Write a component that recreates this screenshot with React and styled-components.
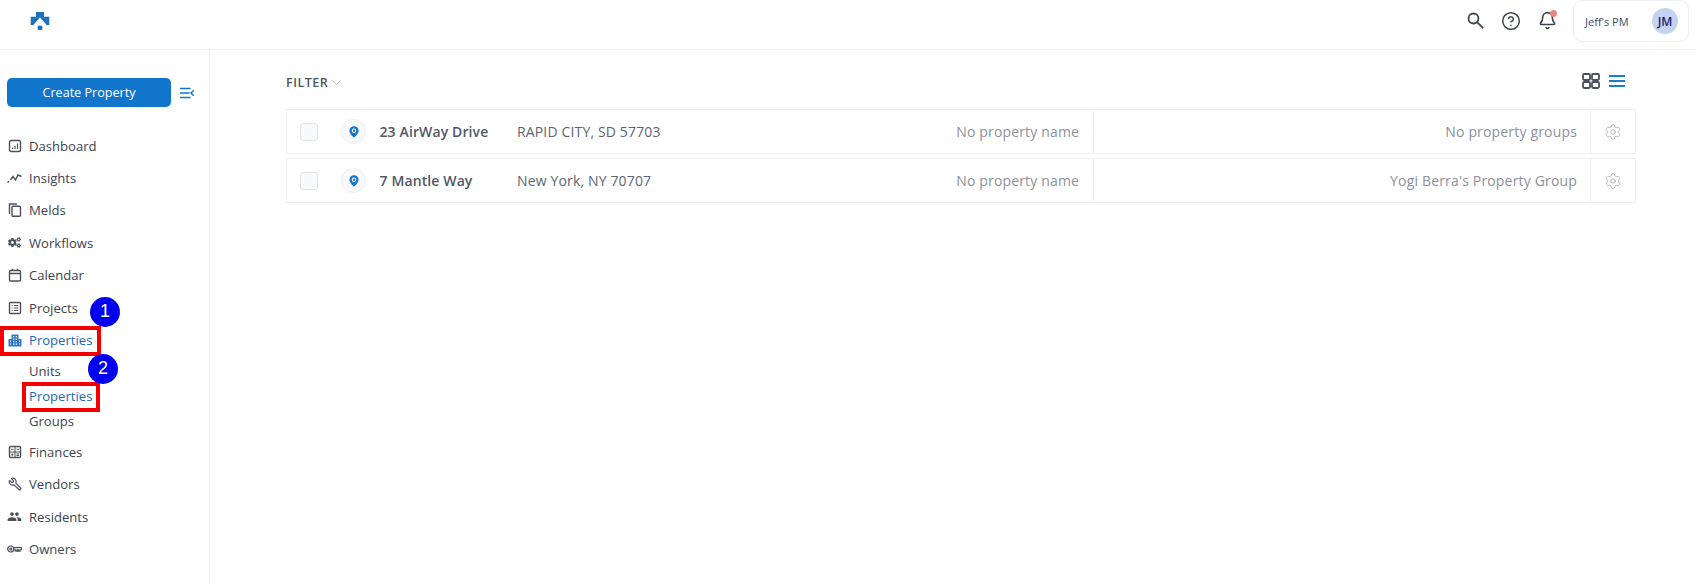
import React from "react";
import styled, { createGlobalStyle } from "styled-components";
import { CircleHelp, Bell, Settings, ChevronDown, Wrench } from "lucide-react";
import { FaCogs } from "react-icons/fa";
import { MdPeople } from "react-icons/md";

const GlobalStyle = createGlobalStyle`
  html, body { margin: 0; padding: 0; background: #fff; }
  body { font-family: "Open Sans", "Liberation Sans", sans-serif; color: #3c4352; }
  * { box-sizing: border-box; }
`;

const Svg = ({ children }) => (
  <svg width="14" height="14" viewBox="0 0 14 14" fill="none" stroke="currentColor" strokeWidth="1.4">
    {children}
  </svg>
);

const SearchIcon = () => (
  <svg width="17" height="17" viewBox="0 0 17 17" fill="none" stroke="currentColor" strokeWidth="1.8">
    <circle cx="6.500" cy="6.500" r="5" />
    <path d="M10.300 10.300L16.200 16.200" />
  </svg>
);
const DashboardIcon = () => (
  <Svg>
    <rect x="1.500" y="1.500" width="11" height="11" rx="1.500" />
    <path d="M4.500 10V8.500M7 10V7M9.500 10V4.500" strokeWidth="1.200" />
  </Svg>
);
const InsightsIcon = () => (
  <svg width="15" height="14" viewBox="0 0 15 14" fill="none" stroke="currentColor" strokeWidth="1.400">
    <path d="M0.500 11.500l1.500-1.300M3.500 9l2.500-3.500 2.500 3.500 2.500-5 3.500 1.500" />
  </svg>
);
const MeldsIcon = () => (
  <Svg>
    <path d="M1.500 11V1h7.500" />
    <rect x="4" y="3.200" width="8.500" height="10" rx="1" />
  </Svg>
);
const CalendarIcon = () => (
  <Svg>
    <rect x="1.500" y="2.500" width="11" height="10.500" rx="1.200" />
    <path d="M1.500 5.500h11M4.500 0.800v2M9.500 0.800v2" />
  </Svg>
);
const ProjectsIcon = () => (
  <Svg>
    <rect x="1.500" y="1.500" width="11" height="11" rx="1.200" />
    <path d="M3.700 4.500h1M6 4.500h4.300M3.700 7h1M6 7h4.300M3.700 9.500h1M6 9.500h4.300" strokeWidth="1.200" />
  </Svg>
);
const BuildingIcon = () => (
  <svg width="14" height="13" viewBox="0 0 14 13" fill="#2f78c4">
    <path
      fillRule="evenodd"
      d="M3.500 0.500h7v4.500h3v7.500H0.500V5h3zM5 2v1.300h1.300V2zM7.700 2v1.300H9V2zM5 4.500v1.300h1.300V4.500zM7.700 4.500v1.300H9V4.500zM2 6.500v1.300h1V6.500zM5 7v1.300h1.300V7zM7.700 7v1.300H9V7zM11 6.500v1.300h1V6.500zM2 9.300v1.300h1V9.300zM5 9.500v1.300h1.300V9.500zM7.700 9.500v1.300H9V9.500zM11 9.300v1.300h1V9.300z"
    />
  </svg>
);
const FinancesIcon = () => (
  <Svg>
    <rect x="1.500" y="1.500" width="11" height="11" rx="1.200" />
    <path d="M7 1.500v11M1.500 7h11M3 4.300h2.500M8.500 4.300H11M3.200 9.700h2.200M4.300 8.600v2.200M8.500 9h2.500M8.500 10.500h2.500" strokeWidth="1" />
  </Svg>
);
const KeyIcon = () => (
  <svg width="16" height="14" viewBox="0 0 16 14" fill="none" stroke="currentColor" strokeWidth="1.300">
    <circle cx="4" cy="7" r="3.200" />
    <circle cx="4" cy="7" r="1" />
    <path d="M7.200 5.500H15.500V7.800H14V9.300H12.300V7.800H11V9.300H9.300V8H7.200" />
  </svg>
);
const CollapseIcon = () => (
  <svg width="14" height="12" viewBox="0 0 14 12" fill="none" stroke="#1175cc" strokeWidth="1.500">
    <path d="M0 1.500h10.500M0 6h9.500M0 10.500h10.500M13.800 3.200L11 6l2.800 2.800" />
  </svg>
);
const GridIcon = () => (
  <svg width="18" height="16" viewBox="0 0 18 16" fill="none" stroke="#4a505c" strokeWidth="1.800">
    <rect x="1" y="1" width="7" height="6" rx="1.200" />
    <rect x="10" y="1" width="7" height="6" rx="1.200" />
    <rect x="1" y="9" width="7" height="6" rx="1.200" />
    <rect x="10" y="9" width="7" height="6" rx="1.200" />
  </svg>
);
const ListIcon = () => (
  <svg width="16" height="14" viewBox="0 0 16 14" fill="none" stroke="#1a7ed6" strokeWidth="1.800">
    <path d="M0 2h16M0 7h16M0 12h16" />
  </svg>
);
const PinIcon = () => (
  <svg width="10" height="12" viewBox="0 0 10 12">
    <path d="M5 0.200a4.600 4.600 0 0 1 4.600 4.600C9.600 7.800 5 11.800 5 11.800S0.400 7.800 0.400 4.800A4.600 4.600 0 0 1 5 0.200z" fill="#1175cc" />
    <circle cx="5" cy="4.700" r="2.300" fill="#fff" />
    <circle cx="5" cy="4.700" r="1.200" fill="#1175cc" />
  </svg>
);
const Logo = () => (
  <svg width="20" height="18" viewBox="0 0 20 18" fill="#1f72bd">
    <path d="M6 0h8v4.700h5.300V13h-2.600L10 5.500 3.300 13H0.700V4.700H6z" />
    <rect x="7.700" y="13.700" width="4.600" height="4.300" />
  </svg>
);

const navTop = [
  ["Dashboard", <DashboardIcon />],
  ["Insights", <InsightsIcon />],
  ["Melds", <MeldsIcon />],
  ["Workflows", <FaCogs size={13} />],
  ["Calendar", <CalendarIcon />],
  ["Projects", <ProjectsIcon />],
];
const navBottom = [
  ["Finances", <FinancesIcon />],
  ["Vendors", <Wrench size={14} strokeWidth={2} style={{ transform: "scaleX(-1)" }} />],
  ["Residents", <MdPeople size={15} />],
  ["Owners", <KeyIcon />],
];

const rows = [
  { name: "23 AirWay Drive", address: "RAPID CITY, SD 57703", group: "No property groups" },
  { name: "7 Mantle Way", address: "New York, NY 70707", group: "Yogi Berra's Property Group" },
];

export default function App() {
  return (
    <Page>
      <GlobalStyle />
      <TopBar>
        <LogoSlot>
          <Logo />
        </LogoSlot>
        <TopActions>
          <TopIcon><SearchIcon /></TopIcon>
          <TopIcon><CircleHelp size={20} strokeWidth={1.8} /></TopIcon>
          <TopIcon>
            <Bell size={19} strokeWidth={2} />
            <BellDot />
          </TopIcon>
          <UserBox>
            <UserName>Jeff's PM</UserName>
            <Avatar>JM</Avatar>
          </UserBox>
        </TopActions>
      </TopBar>
      <Body>
        <Sidebar>
          <CreateRow>
            <CreateButton>Create Property</CreateButton>
            <CollapseIcon />
          </CreateRow>
          <Nav>
            {navTop.map(([label, icon]) => (
              <NavItem key={label}>
                <NavIcon>{icon}</NavIcon>
                {label}
              </NavItem>
            ))}
            <NavItem $active>
              <NavIcon><BuildingIcon /></NavIcon>
              Properties
              <Highlight $left={-7} $top={2} $w={101} $h={30} />
              <Badge $left={83} $top={-27}>1</Badge>
              <Badge $left={81} $top={30}>2</Badge>
            </NavItem>
            <SubNav>
              <SubItem>Units</SubItem>
              <SubItem $active>
                Properties
                <Highlight $left={-7} $top={-1} $w={78} $h={30} />
              </SubItem>
              <SubItem>Groups</SubItem>
            </SubNav>
            {navBottom.map(([label, icon]) => (
              <NavItem key={label}>
                <NavIcon>{icon}</NavIcon>
                {label}
              </NavItem>
            ))}
          </Nav>
        </Sidebar>
        <Main>
          <Toolbar>
            <FilterLabel>
              FILTER
              <ChevronDown size={15} strokeWidth={1.3} color="#a9aeb8" />
            </FilterLabel>
            <ViewToggle>
              <GridIcon />
              <ListIcon />
            </ViewToggle>
          </Toolbar>
          <List>
            {rows.map((row) => (
              <Row key={row.name}>
                <Checkbox />
                <PinCircle><PinIcon /></PinCircle>
                <Name>{row.name}</Name>
                <Address>{row.address}</Address>
                <PropertyName>No property name</PropertyName>
                <Groups>{row.group}</Groups>
                <GearCell><Settings size={18} strokeWidth={1.1} /></GearCell>
              </Row>
            ))}
          </List>
        </Main>
      </Body>
    </Page>
  );
}

const Page = styled.div`
  width: 1696px;
  height: 585px;
  overflow: hidden;
  display: flex;
  flex-direction: column;
`;
const TopBar = styled.header`
  height: 50px;
  flex: none;
  display: flex;
  justify-content: space-between;
  border-bottom: 1px solid #f0f1f3;
  padding: 0 7px 0 30px;
`;
const LogoSlot = styled.div`
  padding-top: 12px;
`;
const TopActions = styled.div`
  display: flex;
  align-items: flex-start;
`;
const TopIcon = styled.div`
  position: relative;
  width: 36px;
  height: 41px;
  display: flex;
  align-items: center;
  justify-content: center;
  color: #3f444e;
`;
const BellDot = styled.span`
  position: absolute;
  top: 10px;
  left: 21px;
  width: 7px;
  height: 7px;
  border-radius: 50%;
  background: #e88585;
`;
const UserBox = styled.div`
  width: 116px;
  height: 42px;
  margin-left: 8px;
  border: 1px solid #eceef1;
  border-radius: 9px;
  display: flex;
  align-items: center;
  justify-content: space-between;
  padding: 0 10px 0 11px;
`;
const UserName = styled.span`
  font-size: 11px;
  color: #3c4a63;
`;
const Avatar = styled.span`
  width: 26px;
  height: 26px;
  border-radius: 50%;
  background: #c3d3f0;
  color: #1d1d6e;
  font-size: 12px;
  font-weight: 600;
  display: flex;
  align-items: center;
  justify-content: center;
`;
const Body = styled.div`
  flex: 1;
  display: flex;
  min-height: 0;
`;
const Sidebar = styled.aside`
  width: 210px;
  flex: none;
  border-right: 1px solid #f0f1f3;
  padding: 28px 0 0 7px;
`;
const CreateRow = styled.div`
  display: flex;
  align-items: center;
  gap: 9px;
`;
const CreateButton = styled.button`
  width: 164px;
  height: 29px;
  border: none;
  border-radius: 5px;
  padding: 0 0 1px;
  background: #1175cc;
  color: #fff;
  font: 400 12.6px "Open Sans", sans-serif;
`;
const Nav = styled.nav`
  margin-top: 22.5px;
  display: flex;
  flex-direction: column;
`;
const NavItem = styled.div`
  position: relative;
  height: 32.4px;
  display: flex;
  align-items: center;
  gap: 7px;
  font-size: 13.1px;
  color: ${(p) => (p.$active ? "#1767b8" : "#3c4352")};
`;
const NavIcon = styled.span`
  width: 15px;
  display: flex;
  justify-content: center;
  color: #4b505b;
`;
const SubNav = styled.div`
  display: flex;
  flex-direction: column;
  padding: 2px 0 2.5px 22px;
`;
const SubItem = styled.div`
  position: relative;
  height: 25px;
  display: flex;
  align-items: center;
  font-size: 13.1px;
  color: ${(p) => (p.$active ? "#1767b8" : "#3c4352")};
`;
const Highlight = styled.span`
  position: absolute;
  left: ${(p) => p.$left}px;
  top: ${(p) => p.$top}px;
  width: ${(p) => p.$w}px;
  height: ${(p) => p.$h}px;
  border: 4px solid #f40000;
`;
const Badge = styled.span`
  position: absolute;
  z-index: 2;
  left: ${(p) => p.$left}px;
  top: ${(p) => p.$top}px;
  width: 30px;
  height: 30px;
  border-radius: 50%;
  background: #0000f0;
  color: #fff;
  font: 400 18px "Liberation Sans", sans-serif;
  display: flex;
  align-items: center;
  justify-content: center;
`;
const Main = styled.main`
  flex: 1;
  padding: 21px 60px 0 76px;
`;
const Toolbar = styled.div`
  height: 22px;
  display: flex;
  align-items: center;
  justify-content: space-between;
  padding-right: 11px;
`;
const FilterLabel = styled.div`
  display: flex;
  align-items: center;
  gap: 1px;
  font-size: 12.5px;
  font-weight: 600;
  letter-spacing: 0.5px;
  color: #4e5562;
`;
const ViewToggle = styled.div`
  display: flex;
  align-items: center;
  gap: 9px;
  margin-bottom: 3px;
`;
const List = styled.div`
  margin-top: 16px;
  display: flex;
  flex-direction: column;
  gap: 4px;
`;
const Row = styled.div`
  height: 45px;
  display: flex;
  align-items: center;
  border: 1px solid #eef0f2;
  padding-left: 13px;
`;
const Checkbox = styled.span`
  width: 18px;
  height: 18px;
  flex: none;
  border: 1px solid #e2e4e8;
  border-radius: 3px;
  background: #f8f9fa;
`;
const PinCircle = styled.span`
  width: 25px;
  height: 25px;
  flex: none;
  margin-left: 23px;
  border: 1px solid #eef0f3;
  border-radius: 50%;
  background: #f8f9fb;
  display: flex;
  align-items: center;
  justify-content: center;
`;
const Name = styled.span`
  width: 137px;
  flex: none;
  margin-left: 13.5px;
  font-size: 14px;
  font-weight: 600;
  letter-spacing: 0.12px;
  color: #525866;
`;
const Address = styled.span`
  flex: 1;
  margin-left: 0.5px;
  font-size: 14px;
  letter-spacing: 0.15px;
  color: #5d6472;
`;
const PropertyName = styled.span`
  padding-right: 14px;
  font-size: 14px;
  letter-spacing: 0.15px;
  color: #8b919c;
`;
const Groups = styled.span`
  width: 497px;
  height: 100%;
  flex: none;
  display: flex;
  align-items: center;
  justify-content: flex-end;
  padding-right: 13px;
  border-left: 1px solid #eef0f2;
  font-size: 14px;
  letter-spacing: 0.17px;
  color: #8b919c;
`;
const GearCell = styled.span`
  width: 45px;
  height: 100%;
  flex: none;
  display: flex;
  align-items: center;
  justify-content: center;
  border-left: 1px solid #eef0f2;
  color: #a3a8b2;
`;
